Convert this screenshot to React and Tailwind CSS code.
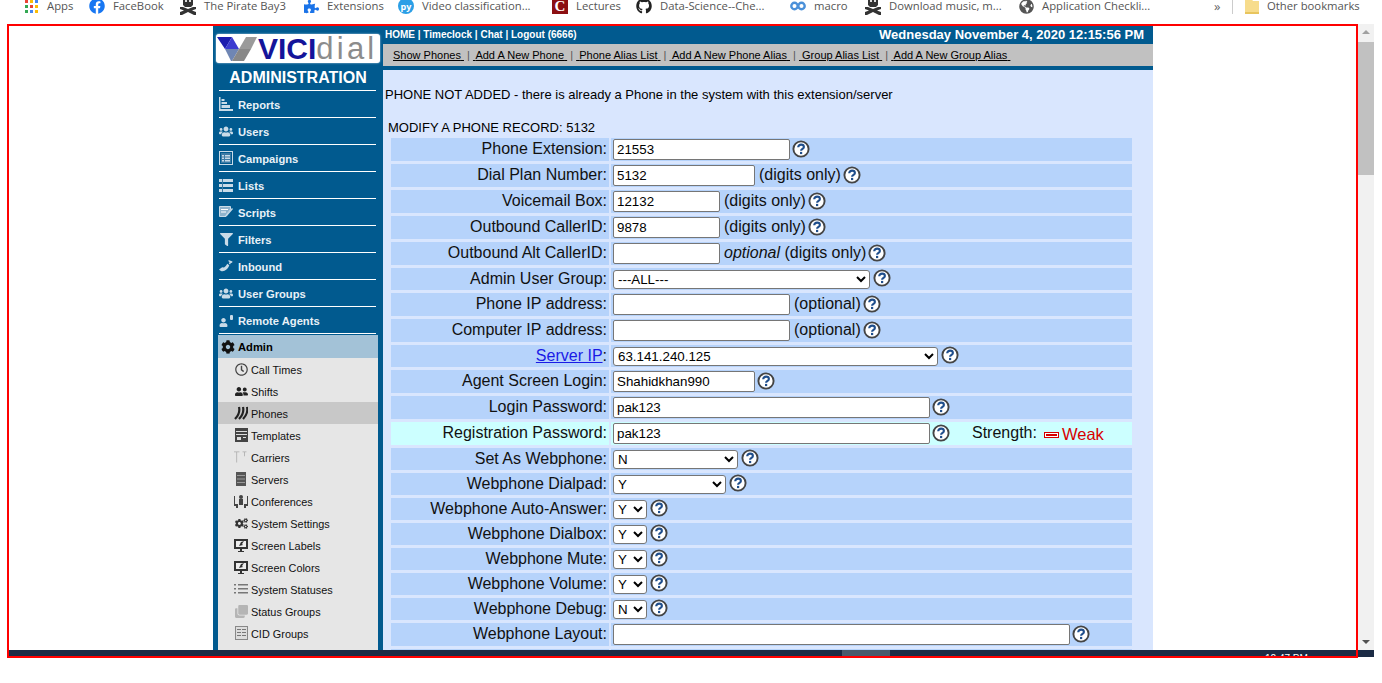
import {
  FaFacebook, FaPuzzlePiece, FaGithub, FaGlobeAmericas, FaUsers, FaFilter,
  FaUser, FaCog, FaRegClock, FaUserFriends, FaCogs, FaClone,
} from 'react-icons/fa';

const font = 'font-["Liberation_Sans",Arial,sans-serif]';

function HelpIcon() {
  return (
    <svg width="18" height="18" viewBox="0 0 18 18" className="shrink-0 -translate-y-px">
      <circle cx="9" cy="9" r="7.6" fill="#fff" stroke="#444" strokeWidth="1.9" />
      <path d="M6.2 7.2c0-1.7 1.3-2.6 2.9-2.6s2.8.9 2.8 2.3c0 2-2.8 1.8-2.8 3.9" fill="none" stroke="#1f4e8c" strokeWidth="2.1" />
      <rect x="8" y="11.9" width="2.2" height="2.2" fill="#1f4e8c" />
    </svg>
  );
}

function Input({ w, value }) {
  return (
    <input
      readOnly
      defaultValue={value}
      className={`${w} h-[21px] shrink-0 border border-[#767676] rounded-[2px] bg-white px-[3px] text-[13.33px] text-black outline-none`}
    />
  );
}

function Select({ w, value }) {
  return (
    <select
      defaultValue={value}
      className={`${w} h-[19px] shrink-0 border border-[#767676] rounded-[3px] bg-white text-[13.33px] text-black`}
    >
      <option>{value}</option>
    </select>
  );
}

function Row({ label, link, h = 'h-[23px]', bg = 'bg-[#B6D3FB]', children }) {
  const up = h === 'h-[23px]' ? '-translate-y-px' : '';
  return (
    <div className={`flex ${h} gap-[2px] shrink-0`}>
      <div className={`w-[218px] ${bg} flex items-center justify-end pr-[2px] text-[16px] text-[#111] whitespace-nowrap`}>
        <span className={up}>{link ? <><a className="text-[#1a1ae6] underline">{link}</a>:</> : label}</span>
      </div>
      <div className={`w-[521px] ${bg} flex items-center pl-[2px] text-[16px] text-[#111] whitespace-nowrap`}>
        {children}
      </div>
    </div>
  );
}

function DigitsRow({ label, w, value }) {
  return (
    <Row label={label}>
      <Input w={w} value={value} />
      <span className="ml-[4px] mr-[2px] -translate-y-px">(digits only)</span>
      <HelpIcon />
    </Row>
  );
}

function SelectRow({ label, w, value, link }) {
  return (
    <Row label={label} link={link} h="h-[22px]">
      <Select w={w} value={value} />
      <span className="w-[3px]" />
      <HelpIcon />
    </Row>
  );
}

function InputRow({ label, w, value, note, bg, children }) {
  return (
    <Row label={label} bg={bg}>
      <Input w={w} value={value} />
      {note && <span className="ml-[4px] -translate-y-px">{note}</span>}
      <span className="w-[2px]" />
      <HelpIcon />
      {children}
    </Row>
  );
}

const light = '#c9dbe8';

function ReportsIcon() {
  return (
    <svg width="14" height="14" viewBox="0 0 14 14" fill={light}>
      <path d="M0 0h1.5v12H14v2H0zM2.5 2h3v2h-3zM2.5 5h5.500v2h-5.500zM2.500 8h8.500v3h-8.500z" />
    </svg>
  );
}

function CampaignsIcon() {
  return (
    <svg width="14" height="14" viewBox="0 0 14 14">
      <rect x=".5" y=".5" width="13" height="13" fill="none" stroke={light} />
      <rect x="2" y="2" width="10" height="10" fill="#3d7ba5" />
      <path d="M3 4h2v1.500H3zM6 4h5v1.500H6zM3 6.500h2V8H3zM6 6.500h5V8H6zM3 9h2v1.500H3zM6 9h5v1.500H6z" fill={light} />
    </svg>
  );
}

function ListsIcon() {
  return (
    <svg width="14" height="13" viewBox="0 0 14 13" fill={light}>
      <path d="M0 0h14v3H0zM0 5h14v3H0zM0 10h14v3H0z" />
      <path d="M3 0h1v13H3z" fill="#3d7ba5" />
    </svg>
  );
}

function ScriptsIcon() {
  return (
    <svg width="14" height="13" viewBox="0 0 14 13">
      <path d="M.5.500h11v3l-4 5-.500 2h-6.500z" fill="#8fb3cc" stroke={light} />
      <path d="M7 9l6-7 1 1-6 7-2 .500z" fill={light} />
      <path d="M2 3h7v1H2zM2 5.500h5v1H2z" fill="#fff" />
    </svg>
  );
}

function InboundIcon() {
  return (
    <svg width="14" height="13" viewBox="0 0 14 13" fill={light}>
      <path d="M0 9.500c1.500 1.800 3.500 2.200 5.500 1.300 2.400-1.100 4-3 4.800-5.500l-2-1.600L6.800 6 5 7.600 3.200 7.200z" />
      <path d="M9.500 0l4 1.500-.500 1.500-1-.300-1 1.700-1.200-.900.800-1.400-1-.500z" />
    </svg>
  );
}

function RemoteIcon() {
  return (
    <span className="flex items-end gap-[2px] h-[14px]">
      <FaUser size={9} color={light} />
      <span className="mb-[7px] w-[3px] h-[5px] bg-[#c9dbe8] rounded-[1px]" />
    </span>
  );
}

function PhonesIcon() {
  return (
    <svg width="14" height="14" viewBox="0 0 14 14" fill="none" stroke="#222" strokeWidth="2.2">
      <path d="M5 1c1 4-.2 8-4 12M9 1c1 4-.2 8-4 12M13 1c1 4-.2 8-4 12" />
    </svg>
  );
}

function TemplatesIcon() {
  return (
    <svg width="13" height="14" viewBox="0 0 13 14">
      <rect width="13" height="14" fill="#444" />
      <path d="M1 3h11v1H1zM1 6h11v1H1zM2 9h4v3H2zM8 9h3v1H8z" fill="#ddd" />
    </svg>
  );
}

function CarriersIcon() {
  return (
    <svg width="18" height="14" viewBox="0 0 18 14" fill="#aaa">
      <path d="M0 0h7v1H4v13H3V1H0zM11 0h5v1h-2v5h-1V1h-2z" />
    </svg>
  );
}

function ServersIcon() {
  return (
    <svg width="10" height="14" viewBox="0 0 10 14">
      <rect width="10" height="14" fill="#555" />
      <path d="M1 3h8v1H1zM1 6.500h8v1H1zM1 10h8v1H1z" fill="#999" />
    </svg>
  );
}

function ConferencesIcon() {
  return (
    <svg width="14" height="14" viewBox="0 0 14 14" fill="#444">
      <circle cx="7" cy="3" r="2" />
      <path d="M5 5h4v6H5zM0 2h1v8h3v4H2v-2H0zM13 2h1v10h-2v2h-2v-4h3z" />
    </svg>
  );
}

function ScreenIcon() {
  return (
    <svg width="14" height="13" viewBox="0 0 14 13">
      <rect width="14" height="10" fill="#333" />
      <rect x="2" y="2" width="10" height="6" fill="#eee" />
      <path d="M5 7l2-4 3-1-2 3 1 1z" fill="#333" />
      <path d="M6 10h2v2h2v1H4v-1h2z" fill="#333" />
    </svg>
  );
}

function StatusesIcon() {
  return (
    <svg width="14" height="12" viewBox="0 0 14 12" fill="#777">
      <path d="M0 1h2v1.500H0zM4 1h10v1.500H4zM0 5h2v1.500H0zM4 5h10v1.500H4zM0 9h2v1.500H0zM4 9h10v1.500H4z" />
    </svg>
  );
}

function CidIcon() {
  return (
    <svg width="13" height="14" viewBox="0 0 13 14">
      <rect x=".5" y=".5" width="12" height="13" fill="#ddd" stroke="#888" />
      <path d="M2 3h4v1H2zM2 6h4v1H2zM2 9h4v1H2zM7 3h4v1H7zM7 6h4v1H7zM7 9h4v1H7z" fill="#777" />
    </svg>
  );
}

const mainMenu = [
  ['Reports', <ReportsIcon />],
  ['Users', <FaUsers size={15} color={light} />],
  ['Campaigns', <CampaignsIcon />],
  ['Lists', <ListsIcon />],
  ['Scripts', <ScriptsIcon />],
  ['Filters', <FaFilter size={13} color={light} />],
  ['Inbound', <InboundIcon />],
  ['User Groups', <FaUsers size={15} color={light} />],
  ['Remote Agents', <RemoteIcon />],
];

const subMenu = [
  ['Call Times', <FaRegClock size={13} color="#444" />],
  ['Shifts', <FaUserFriends size={13} color="#222" />],
  ['Phones', <PhonesIcon />, true],
  ['Templates', <TemplatesIcon />],
  ['Carriers', <CarriersIcon />],
  ['Servers', <ServersIcon />],
  ['Conferences', <ConferencesIcon />],
  ['System Settings', <FaCogs size={13} color="#333" />],
  ['Screen Labels', <ScreenIcon />],
  ['Screen Colors', <ScreenIcon />],
  ['System Statuses', <StatusesIcon />],
  ['Status Groups', <FaClone size={13} color="#b5b5b5" />],
  ['CID Groups', <CidIcon />],
];

function Logo() {
  return (
    <div className="mt-[8px] ml-[3px] w-[164px] h-[29px] shrink-0 bg-white rounded-[3px] flex items-center overflow-hidden shadow-[0_0_2px_#cfe0ee]">
      <svg width="42" height="26" viewBox="0 0 42 26" className="shrink-0">
        <path d="M1 1h15l-7 12z" fill="#1c1cae" />
        <path d="M16 1l7 12H9z" fill="#3b3bd0" />
        <path d="M23 13l7-12h11l-6 12z" fill="#9a9a9a" />
        <path d="M9 13h14l-7 12h-1z" fill="#6f86b4" />
        <path d="M23 13h12l-7 12h-12z" fill="#888" />
      </svg>
      <span className="text-[30px] leading-none font-bold text-[#14149a]">VICI</span>
      <span className="text-[31px] leading-none text-[#8c8c8c] tracking-[3.2px]">dial</span>
    </div>
  );
}

function Sidebar() {
  return (
    <div className="w-[170px] h-full shrink-0 bg-[#015A8F] flex flex-col overflow-hidden">
      <Logo />
      <div className="mt-[3px] text-center text-[16px] leading-[24px] font-bold text-white shrink-0">ADMINISTRATION</div>
      <div className="mx-[6px] w-[157px] border-b border-white shrink-0" />
      {mainMenu.map(([name, icon]) => (
        <div key={name} className="mx-[6px] w-[157px] h-[27px] shrink-0 border-b border-white flex items-center gap-[5px] text-[11.2px] font-bold text-[#E8F1F7]">
          <span className="w-[14px] flex justify-center">{icon}</span>
          <span className="translate-y-px">{name}</span>
        </div>
      ))}
      <div className="mx-[5px] mt-[1px] h-[23px] shrink-0 bg-[#A3C2D7] flex items-center gap-[3px] pl-[3px] text-[11.2px] font-bold text-black">
        <FaCog size={14} color="#111" />
        <span className="translate-y-px">Admin</span>
      </div>
      <div className="mx-[5px] flex-1 bg-[#E6E6E6]">
        {subMenu.map(([name, icon, active]) => (
          <div key={name} className={`h-[22px] flex items-center pl-[16px] gap-[3px] text-[10.9px] text-[#111] ${active ? 'bg-[#C8C8C8]' : ''}`}>
            <span className="w-[14px] flex justify-center">{icon}</span>
            <span className="translate-y-px">{name}</span>
          </div>
        ))}
      </div>
    </div>
  );
}

const links = ['Show Phones', 'Add A New Phone', 'Phone Alias List', 'Add A New Phone Alias', 'Group Alias List', 'Add A New Group Alias'];

function Main() {
  return (
    <div className="w-[770px] h-full shrink-0 bg-[#D9E6FE] overflow-hidden">
      <div className="h-[18px] bg-[#015A8F] flex justify-between pl-[2px] pr-[9px] text-white font-bold">
        <span className="text-[10px] leading-[18px]">HOME | Timeclock | Chat | Logout (6666)</span>
        <span className="text-[13px] leading-[18px]">Wednesday November 4, 2020 12:15:56 PM</span>
      </div>
      <div className="h-[22px] bg-[#C1C1C1] flex items-center pl-[10px] pt-px text-[11px] text-black whitespace-pre">
        {links.map((link, i) => (
          <span key={link}>
            {i > 0 && <span className="text-[#555]"> | </span>}
            <span className="underline">{i > 0 ? ' ' : ''}{link} </span>
          </span>
        ))}
      </div>
      <div className="h-[4px] bg-[#015A8F]" />
      <div className="pt-[17px] pl-[2px] text-[13px] leading-[16px] text-black">
        PHONE NOT ADDED - there is already a Phone in the system with this extension/server
      </div>
      <div className="pt-[17px] pl-[5px] text-[13px] leading-[16px] text-black">MODIFY A PHONE RECORD: 5132</div>
      <div className="mt-[2px] ml-[8px] flex flex-col gap-[3px]">
        <InputRow label="Phone Extension:" w="w-[177px]" value="21553" />
        <DigitsRow label="Dial Plan Number:" w="w-[142px]" value="5132" />
        <DigitsRow label="Voicemail Box:" w="w-[107px]" value="12132" />
        <DigitsRow label="Outbound CallerID:" w="w-[107px]" value="9878" />
        <Row label="Outbound Alt CallerID:">
          <Input w="w-[107px]" value="" />
          <span className="ml-[4px] mr-[2px] -translate-y-px"><i>optional</i> (digits only)</span>
          <HelpIcon />
        </Row>
        <SelectRow label="Admin User Group:" w="w-[257px]" value="---ALL---" />
        <InputRow label="Phone IP address:" w="w-[177px]" value="" note="(optional)" />
        <InputRow label="Computer IP address:" w="w-[177px]" value="" note="(optional)" />
        <SelectRow link="Server IP" w="w-[325px]" value="63.141.240.125" />
        <InputRow label="Agent Screen Login:" w="w-[142px]" value="Shahidkhan990" />
        <InputRow label="Login Password:" w="w-[317px]" value="pak123" />
        <InputRow label="Registration Password:" w="w-[317px]" value="pak123" bg="bg-[#CCFFFF]">
          <span className="ml-[22px] -translate-y-px">Strength:</span>
          <span className="ml-[7px] w-[15px] h-[6px] border border-[#d40000] bg-[#d40000] outline-1 outline-white -outline-offset-2 translate-y-px" />
          <span className="ml-[3px] text-[16.5px] text-[#d80000] translate-y-px">Weak</span>
        </InputRow>
        <SelectRow label="Set As Webphone:" w="w-[125px]" value="N" />
        <SelectRow label="Webphone Dialpad:" w="w-[113px]" value="Y" />
        <SelectRow label="Webphone Auto-Answer:" w="w-[34px]" value="Y" />
        <SelectRow label="Webphone Dialbox:" w="w-[34px]" value="Y" />
        <SelectRow label="Webphone Mute:" w="w-[34px]" value="Y" />
        <SelectRow label="Webphone Volume:" w="w-[34px]" value="Y" />
        <SelectRow label="Webphone Debug:" w="w-[34px]" value="N" />
        <InputRow label="Webphone Layout:" w="w-[457px]" value="" />
        <Row label="" />
      </div>
    </div>
  );
}

function AppsIcon() {
  const colors = ['#ea4335', '#fbbc05', '#4285f4', '#34a853', '#ea4335', '#fbbc05', '#34a853', '#4285f4', '#fbbc05'];
  return (
    <span className="grid grid-cols-3 gap-[2px] w-[13px]">
      {colors.map((c, i) => <span key={i} className="w-[3px] h-[3px]" style={{ background: c }} />)}
    </span>
  );
}

function PirateIcon() {
  return (
    <svg width="16" height="18" viewBox="0 0 16 18" fill="#333">
      <path d="M3 0h10v8l-2 2H5L3 8z" />
      <path d="M5 3h2v2H5zM9 3h2v2H9z" fill="#ddd" />
      <path d="M0 10h3l5 2 5-2h3v2l-4 1.500 4 1.500v3h-2l-6-3-6 3H0v-3l4-1.500L0 12z" />
    </svg>
  );
}

function FolderIcon() {
  return (
    <svg width="14" height="18" viewBox="0 0 14 18">
      <path d="M0 1h6l2 3h6v13H0z" fill="#f7dc8c" />
      <path d="M0 15h14v2H0z" fill="#e8c55e" />
    </svg>
  );
}

const bookmarks = [
  ['Apps', <AppsIcon />, 'w-[66px]'],
  ['FaceBook', <FaFacebook size={16} color="#1877f2" />, 'w-[91px]'],
  ['The Pirate Bay3', <PirateIcon />, 'w-[123px]'],
  ['Extensions', <FaPuzzlePiece size={15} color="#1a73e8" />, 'w-[95px]'],
  ['Video classification...', <span className="w-4 h-4 rounded-full bg-[#2b9fe6] text-white text-[9px] leading-none font-bold flex items-center justify-center">py</span>, 'w-[154px]'],
  ['Lectures', <span className='w-4 h-4 bg-[#8c0f12] text-white text-[15px] leading-4 text-center font-["Liberation_Serif",serif] font-bold'>C</span>, 'w-[84px]'],
  ['Data-Science--Che...', <FaGithub size={16} color="#222" />, 'w-[154px]'],
  ['macro', <svg width="16" height="10" viewBox="0 0 16 10" fill="none" stroke="#4a90d9" strokeWidth="2.4"><circle cx="4.5" cy="5" r="3.2" /><circle cx="11.5" cy="5" r="3.2" /></svg>, 'w-[75px]'],
  ['Download music, m...', <PirateIcon />, 'w-[153px]'],
  ['Application Checkli...', <FaGlobeAmericas size={15} color="#555" />, 'w-[196px]'],
];

function BookmarkBar() {
  return (
    <div className='h-6 overflow-hidden bg-white font-["Open_Sans",sans-serif] text-[11.3px] leading-[12px] text-[#555]'>
      <div className="h-3 flex items-center pl-[23px] whitespace-nowrap">
        {bookmarks.map(([name, icon, w]) => (
          <div key={name} className={`${w} shrink-0 flex items-center gap-2`}>
            <span className="w-4 flex justify-center shrink-0">{icon}</span>
            {name}
          </div>
        ))}
        <span className="w-[18px] text-[13px] text-[#666]">»</span>
        <span className="w-px h-4 bg-[#ccc] mr-[12px]" />
        <span className="mr-[8px]"><FolderIcon /></span>
        Other bookmarks
      </div>
    </div>
  );
}

function Scrollbar() {
  return (
    <div className="w-4 h-full shrink-0 bg-[#F1F1F1] flex flex-col items-center relative">
      <span className="mt-[6px] w-0 h-0 border-x-4 border-x-transparent border-b-4 border-b-[#a0a0a0]" />
      <span className="mt-[8px] w-full h-[133px] bg-[#C1C1C1]" />
      <span className="mt-auto mb-[6px] w-0 h-0 border-x-4 border-x-transparent border-t-4 border-t-[#505050]" />
    </div>
  );
}

export default function App() {
  return (
    <div className={`relative w-[1382px] h-[683px] overflow-hidden bg-white ${font}`}>
      <BookmarkBar />
      <div className="h-[626px] flex pr-2">
        <div className="flex-1 flex pl-[213px] pt-[2px]">
          <Sidebar />
          <Main />
        </div>
        <Scrollbar />
      </div>
      <div className="mx-2 h-[7px] bg-[#1B2B45] flex overflow-hidden">
        <span className="ml-[834px] w-[48px] h-full bg-[#4a5a6c]" />
        <span className="ml-[375px] text-[10px] leading-[18px] text-white">12:47 PM</span>
      </div>
      {/* red annotation frame drawn on top of the screenshot */}
      <div className="absolute left-[7px] top-[24px] w-[1351px] h-[634px] border-2 border-[#FF0000] pointer-events-none" />
    </div>
  );
}
